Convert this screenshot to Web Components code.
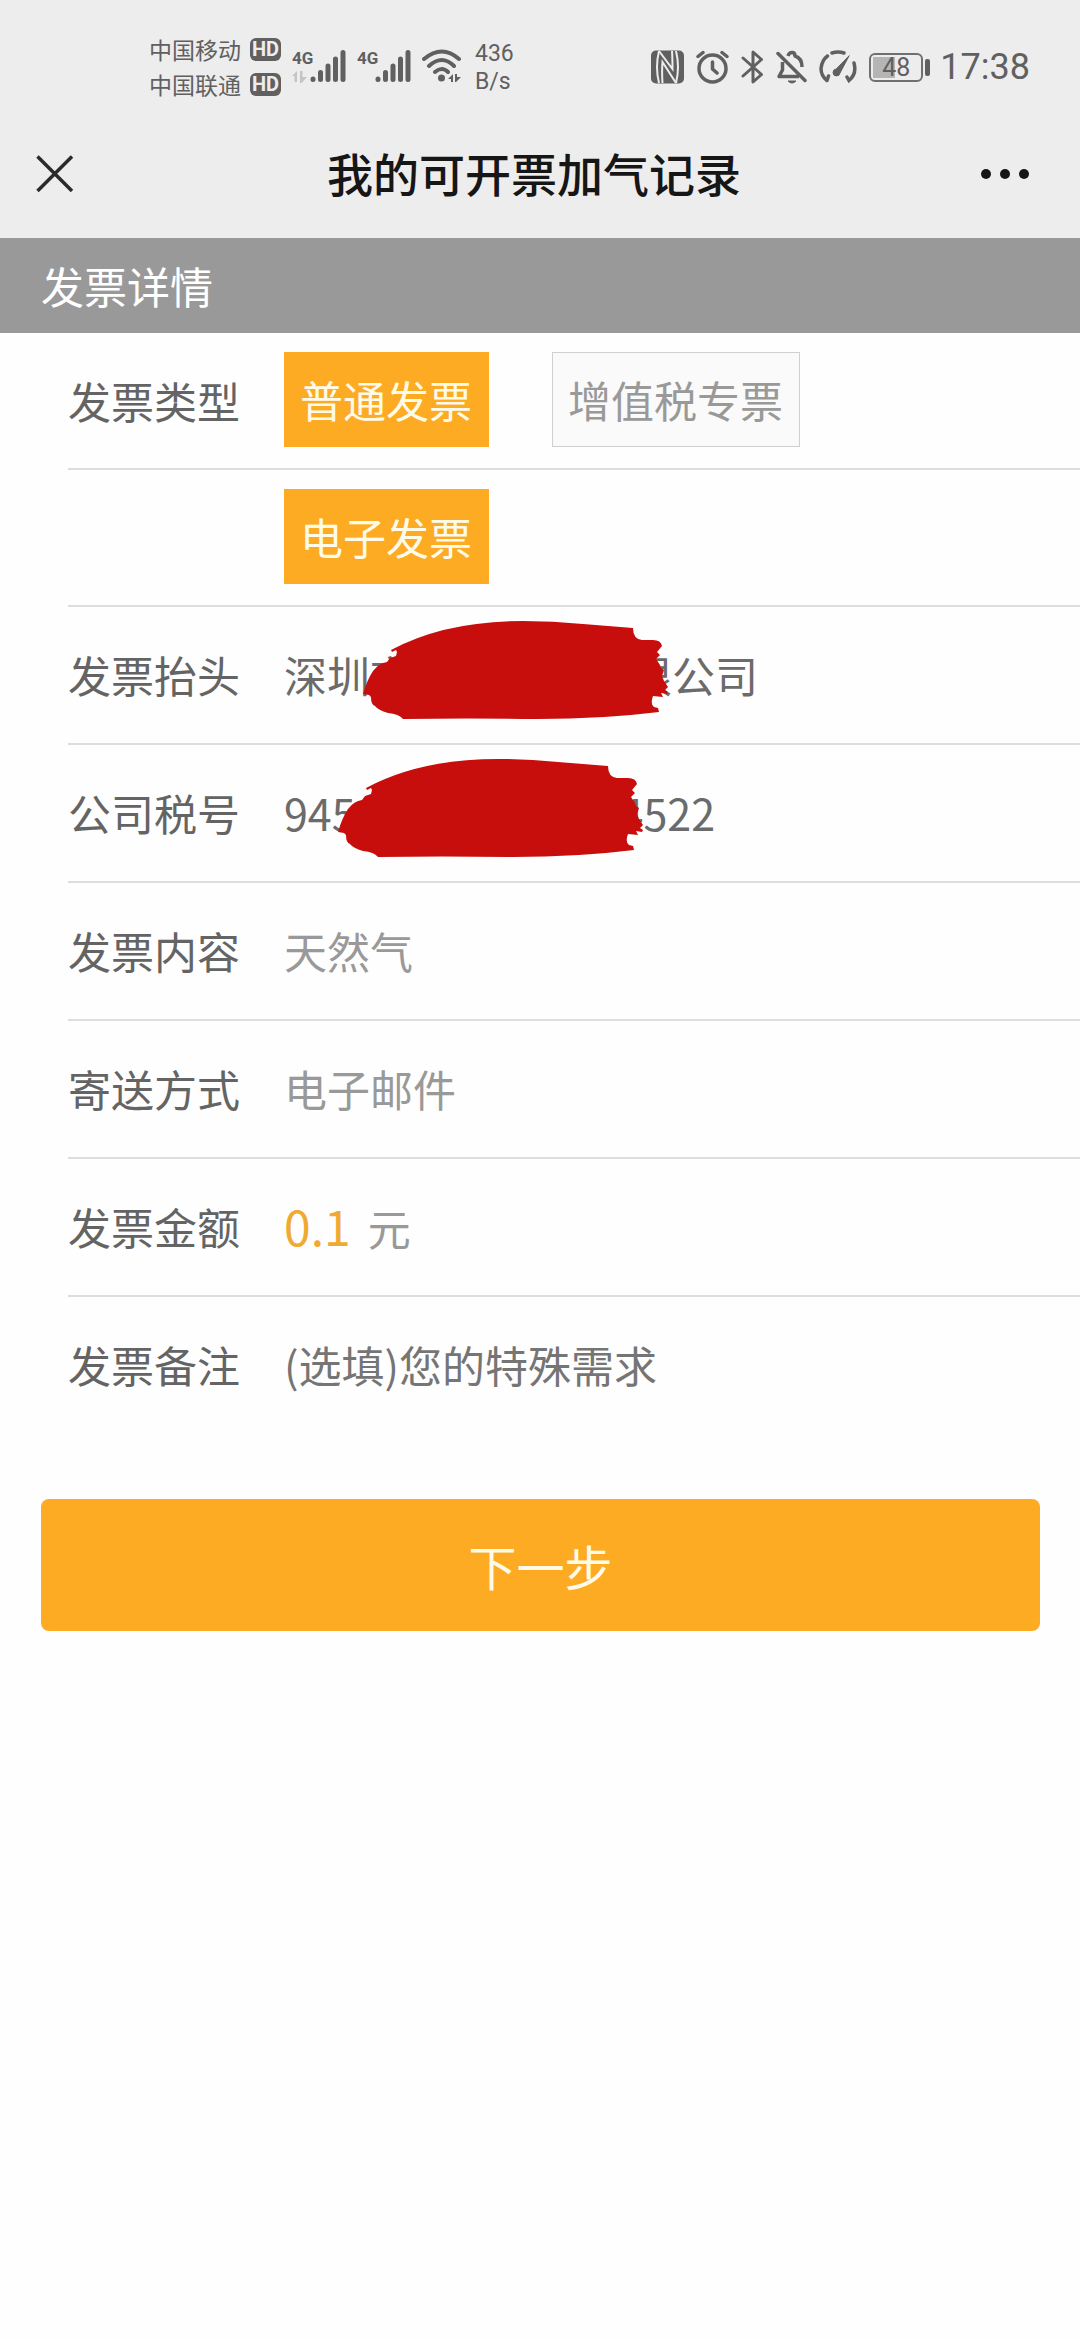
<!DOCTYPE html>
<html lang="zh-CN">
<head>
<meta charset="utf-8">
<meta name="viewport" content="width=device-width, initial-scale=1">
<title>我的可开票加气记录</title>
<style>
  html { background: #fefefe; }
  body { margin: 0; font-family: "Noto Sans CJK SC", sans-serif; font-size: 43px; color: #646464; }
</style>
</head>
<body>
<invoice-page></invoice-page>
<script>
const define = (name, html, init) => {
  const template = document.createElement('template');
  template.innerHTML = html;
  customElements.define(name, class extends HTMLElement {
    constructor() {
      super();
      this.attachShadow({ mode: 'open' }).append(template.content.cloneNode(true));
    }
    connectedCallback() { if (init) init(this, this.shadowRoot); }
  });
};

/* One SIM line: carrier name and HD badge */
define('carrier-line', `
<style>
  :host { display: flex; align-items: center; gap: 9px; height: 35px; font-size: 23px; line-height: 35px; }
  b { display: block; width: 31px; height: 23px; border-radius: 6px; background: #606060; color: #ededed;
      font: bold 20px/23px Roboto, sans-serif; text-align: center; }
</style>
<slot></slot><b>HD</b>`);

/* Mobile signal: network label, optional data arrows, five bars */
define('signal-meter', `
<style>
  :host { display: grid; width: 54px; height: 34px; }
  span, svg { grid-area: 1 / 1; }
  span { font: bold 17px/18px Roboto, sans-serif; }
  svg { display: block; }
  .data { display: none; }
  :host([data-active]) .data { display: inline; }
</style>
<span>4G</span>
<svg width="54" height="34" viewBox="0 0 54 34" fill="#606060">
  <g class="data" fill="#c4c4c4"><path d="M0 27 5 22V33H2.500V27Z"/><path d="M8 22H10.500V28H15L9.500 34H8Z"/></g>
  <g stroke="#606060" stroke-width="5" stroke-linecap="round">
    <path d="M21 30.500V30M28.500 30.500V23.500M36 30.500V17M43.500 30.500V10M51 30.500V3.500"/>
  </g>
</svg>`);

define('status-bar', `
<style>
  :host { display: flex; justify-content: space-between; height: 110px; padding: 32px 50px 0 149px; box-sizing: border-box; color: #606060; }
  .side { display: flex; align-items: flex-start; }
  svg { display: block; flex: none; }
  .meters { display: flex; gap: 11px; padding: 17px 0 0 11px; }
  .speed { margin: 8px 0 0 13px; font: 23px/28px Roboto, sans-serif; }
  .icons { display: flex; align-items: center; height: 68px; margin-top: 1px; }
  .icons svg + svg { margin-left: 12px; }
  .battery { display: flex; align-items: center; gap: 2px; margin: 0 10px 0 12px; }
  .cell { width: 54px; height: 29px; box-sizing: border-box; border: 2px solid #707070; border-radius: 6px;
          background: linear-gradient(#b5b5b5, #b5b5b5) 2px 2px / 22px 21px no-repeat; font: 25px/26px Roboto, sans-serif; text-align: center; }
  .tip { width: 5px; height: 17px; border-radius: 2px; background: #606060; }
  time { font: 36px/42px Roboto, sans-serif; }
</style>
<div class="side">
  <div><carrier-line>中国移动</carrier-line><carrier-line>中国联通</carrier-line></div>
  <div class="meters">
    <signal-meter data-active></signal-meter>
    <signal-meter></signal-meter>
    <svg width="40" height="34" viewBox="0 0 40 34" fill="none" stroke="#606060" stroke-width="4" stroke-linecap="round">
      <path d="M2 10Q20-5 37 10M7 17Q20 5 32 17M13 23Q20 17 26 23"/>
      <circle cx="19.500" cy="29" r="3.500" fill="#606060" stroke="none"/>
      <path d="M26 30 31 25V33H29V30ZM33 25H35V28H39L34 33H33Z" fill="#606060" stroke="none"/>
    </svg>
  </div>
  <div class="speed">436<br>B/s</div>
</div>
<div class="side icons">
  <svg width="33" height="34" viewBox="0 0 33 34">
    <rect width="33" height="33" y=".5" rx="5" fill="#606060"/>
    <path d="M8 1C5.500 11 5.500 23 8 33M25 33C27.500 23 27.500 11 25 1" fill="none" stroke="#ededed" stroke-width="2"/>
    <path d="M8 1 21.500 19C21.500 14 21.500 8 21 1M11.500 33C11 25 11 18 11.500 12L25 33" fill="none" stroke="#ededed" stroke-width="2"/>
  </svg>
  <svg width="33" height="34" viewBox="0 0 33 34" fill="none" stroke="#606060" stroke-width="3.500" stroke-linecap="round" stroke-linejoin="round">
    <circle cx="16.500" cy="18.500" r="13.500"/><path d="M16.500 12V19L21 23M2 6.500 7 2.500M31 6.500 26 2.500"/>
  </svg>
  <svg width="23" height="36" viewBox="0 0 23 36" fill="none" stroke="#606060" stroke-width="3" stroke-linejoin="round" stroke-linecap="round">
    <path d="M2 9 20.500 25.500 12 33V3L20.500 10.500 2 27"/>
  </svg>
  <svg width="31" height="34" viewBox="0 0 31 34" fill="none" stroke="#606060" stroke-width="3.500" stroke-linejoin="round">
    <path d="M2 3.500 29 30.500" stroke-linecap="round"/>
    <path d="M6.500 12V20L3 26.500H23M12 6Q13 2.500 16 2.500T19 6Q26 8 26 17"/>
    <path d="M12 31H20Q16 35 12 31Z" fill="#606060" stroke-width="1"/>
  </svg>
  <svg width="38" height="34" viewBox="0 0 38 34" fill="none" stroke="#606060" stroke-width="3.500" stroke-linecap="round">
    <path d="M8 30.500 9.500 26M8 30.500Q2 26 2 18.500Q3 10 8.500 6M13 3Q19 1 25 3M35 13Q38 24 30 30.500L28 27"/>
    <path d="M30 6 21 23A3.500 3.500 0 1 1 17 19Z" fill="#606060" stroke-width="1"/>
  </svg>
  <div class="battery"><div class="cell">48</div><div class="tip"></div></div>
  <time>17:38</time>
</div>`);

define('nav-bar', `
<style>
  :host { display: grid; grid-template-columns: 1fr auto 1fr; align-items: center; height: 128px; padding: 0 48px 0 36px; box-sizing: border-box; color: #161616; }
  h1 { margin: 0; font-size: 46px; font-weight: 500; line-height: 124px; height: 128px; }
  button { display: block; padding: 0; border: 0; background: none; color: inherit; margin-bottom: 1px; }
  button:last-child { justify-self: end; }
  svg { display: block; }
</style>
<button aria-label="关闭"><svg width="38" height="38" viewBox="0 0 38 38" fill="none" stroke="#2a2a2a" stroke-width="3.500"><path d="M1.500 1.500 36 36M36 1.500 1.500 36"/></svg></button>
<h1><slot></slot></h1>
<button aria-label="更多"><svg width="51" height="12" viewBox="0 0 51 12" fill="#161616"><circle cx="5" cy="6" r="5"/><circle cx="24" cy="6" r="5"/><circle cx="43" cy="6" r="5"/></svg></button>`);

define('section-title', `
<style>
  :host { display: block; background: #999; color: #fff; }
  h2 { margin: 0; padding: 0 41px; font-size: 43px; font-weight: 400; line-height: 95px; }
</style>
<h2><slot></slot></h2>`);

/* A form line: label on the left, slotted value on the right, rule below */
define('form-row', `
<style>
  :host { display: flex; align-items: center; height: 138px; margin-left: 68px; padding-bottom: 2px; box-sizing: border-box; border-bottom: 2px solid #ddd; }
  :host([choices]) { height: 137px; }
  :host([last]) { border-bottom-color: transparent; }
  label { flex: none; width: 216px; line-height: 64px; }
  .value { flex: 1; display: flex; align-items: center; gap: 63px; line-height: 64px; color: #999; }
</style>
<label></label><div class="value"><slot></slot></div>`, (host, root) => {
  const label = root.querySelector('label');
  label.textContent = host.getAttribute('label') || '';
  const field = host.querySelector('remark-field');
  if (field) label.addEventListener('click', () => field.shadowRoot.querySelector('input').focus());
});

define('choice-tag', `
<style>
  :host { display: block; }
  button { display: block; height: 95px; padding: 0 16px 0 15px; box-sizing: border-box; border: 1px solid #d0d0d0; border-radius: 0;
           background: #fafafa; color: #999; font: inherit; line-height: 91px; }
  :host([selected]) button { background: #feab24; border-color: #feab24; color: #fffbe8; }
</style>
<button><slot></slot></button>`);

/* Text whose middle is painted over with a brush stroke */
define('redacted-text', `
<style>
  :host { display: flex; justify-content: space-between; position: relative; width: var(--w); color: #6b6b6b; }
  svg { position: absolute; left: var(--x); top: -21px; }
</style>
<slot name="start"></slot><slot name="end"></slot>
<svg width="308" height="100" viewBox="0 0 308 100" fill="#c80d0d" aria-hidden="true">
  <path d="M28 29Q82 0 160 0Q190 0 220 3L270 7Q270 18 279 19H290Q298 19 299 25L294 31L297 34L293 38L297 44L298 47L301 49L299 55L301 60L305 66L302 69L305 71L304 73L298 72L300 76L290 75Q287 83 291 86L295 87L296 91Q240 98 175 98Q100 97 40 98Q36 93 25 92Q15 89 12 85Q8 84 8 76L6 74L0 73Q4 59 10 50Q16 42 24 41L27 37L33 35L34 31L33 29L29 31Z"/>
</svg>`);

define('money-value', `
<style>
  :host { display: flex; align-items: baseline; gap: 17px; }
  b { font-size: 48px; font-weight: 400; color: #efaa32; }
</style>
<b><slot></slot></b><span>元</span>`);

define('remark-field', `
<style>
  :host { display: block; flex: 1; }
  input { display: block; width: 100%; height: 64px; padding: 0; border: 0; outline: 0; background: none; font: inherit; color: #646464; }
  input::placeholder { color: #757575; opacity: 1; }
</style>
<input type="text" aria-label="发票备注" placeholder="(选填)您的特殊需求">`);

define('submit-button', `
<style>
  :host { display: block; padding: 64px 40px 0 41px; }
  button { display: block; width: 100%; height: 132px; padding: 0; border: 0; border-radius: 8px; background: #feab24; color: #fffbe8; font: inherit; font-size: 48px; line-height: 132px; }
</style>
<button><slot></slot></button>`);

define('invoice-page', `
<style>
  :host { display: block; }
  header { background: #ededed; }
  .company { --w: 474px; --x: 79px; }
  .tax { --w: 431px; --x: 54px; }
</style>
<header><status-bar></status-bar><nav-bar>我的可开票加气记录</nav-bar></header>
<main>
  <section-title>发票详情</section-title>
  <form-row label="发票类型" choices><choice-tag selected>普通发票</choice-tag><choice-tag>增值税专票</choice-tag></form-row>
  <form-row choices><choice-tag selected>电子发票</choice-tag></form-row>
  <form-row label="发票抬头"><redacted-text class="company"><span slot="start">深圳市</span><span slot="end">限公司</span></redacted-text></form-row>
  <form-row label="公司税号"><redacted-text class="tax"><span slot="start">945</span><span slot="end">4522</span></redacted-text></form-row>
  <form-row label="发票内容">天然气</form-row>
  <form-row label="寄送方式">电子邮件</form-row>
  <form-row label="发票金额"><money-value>0.1</money-value></form-row>
  <form-row label="发票备注" last><remark-field></remark-field></form-row>
  <submit-button>下一步</submit-button>
</main>`);
</script>
</body>
</html>
